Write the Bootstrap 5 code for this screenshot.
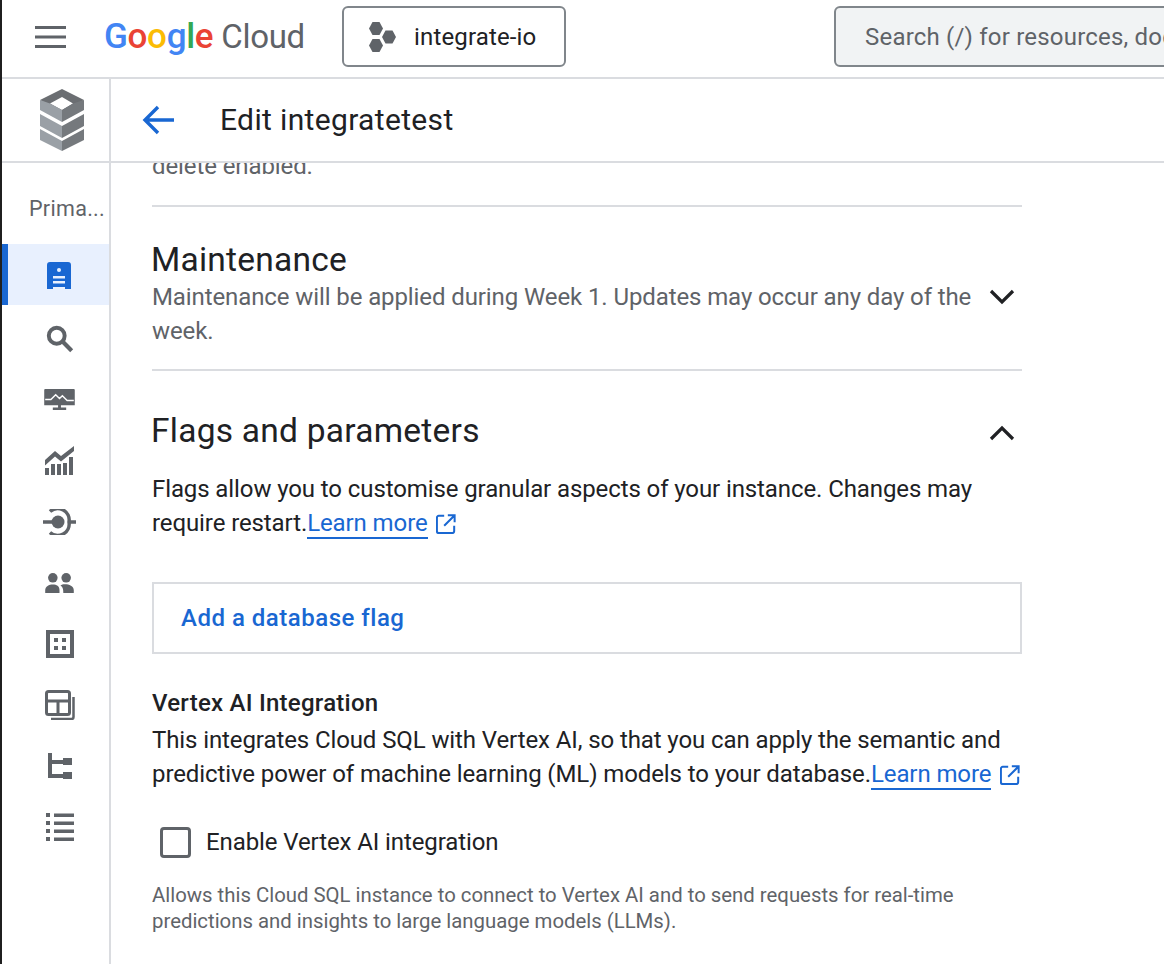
<!DOCTYPE html>
<html lang="en">
<head>
<meta charset="utf-8">
<title>Edit integratetest</title>
<link href="https://cdn.jsdelivr.net/npm/bootstrap@5.3.0/dist/css/bootstrap.min.css" rel="stylesheet">
<style>
html,body{height:100%;overflow:hidden}
body{font-family:Roboto,"Liberation Sans",sans-serif;color:#202124;background:#fff;font-size:24px;line-height:34px}
.shell{height:964px;border-left:2px solid #1f1f1f;overflow:hidden}
.topbar{height:79px;border-bottom:2px solid #dadce0;white-space:nowrap;overflow:hidden;padding-bottom:4px}
.burger{width:33px;margin-left:32px;flex:none}
.gc-logo{margin-left:37px;width:200px;font-size:35px;line-height:40px;letter-spacing:-.3px;font-family:Roboto,sans-serif;font-weight:500;flex:none}
.gc-logo .cloud{color:#5f6368;margin-left:8px;letter-spacing:-.3px;font-size:33px;font-weight:400}
.proj{margin-left:38px;width:224px;height:61px;border:2px solid #80868b;border-radius:6px;font-size:24px;flex:none;padding-left:24px;gap:17px;letter-spacing:.15px}
.searchbox{margin-left:268px;width:600px;height:61px;border:2px solid #80868b;border-radius:6px;background:#f1f3f4;color:#5f6368;padding-left:29px;flex:none;letter-spacing:.2px}
.rail{width:109px;border-right:2px solid #dadce0;flex:none}
.rail-logo{height:84px;border-bottom:2px solid #dadce0;margin-right:-2px;width:110px;padding-left:9px}
.rail-label{height:81px;font-size:21.500px;color:#5f6368;padding-left:27px;letter-spacing:.3px;padding-top:10px}
.rail-item{height:61px;padding-left:8px;padding-top:6px}
.rail-item.on{background:#e8f0fe;border-left:6px solid #1967d2;padding-left:0;padding-top:2px}
.subhead{height:84px;border-bottom:2px solid #dadce0}
.back{margin-left:30px;width:36px;flex:none}
.subhead h1{font-size:30px;line-height:40px;margin:0 0 0 43px;font-weight:400;letter-spacing:.35px;color:#202124}
.pane{width:870px;margin-left:41px}
.clipline{height:44px;color:#5f6368;overflow:hidden;border-bottom:2px solid #dadce0}
.clipline span{display:block;margin-top:-14px;letter-spacing:-.1px}
.sect{border-bottom:2px solid #dadce0}
.headline{font-size:33.500px;font-weight:400;line-height:40px;margin:0 0 0 -1px;color:#202124;letter-spacing:.25px}
.muted-t{color:#5f6368;letter-spacing:-.1px}
.body-t{letter-spacing:-.1px}
.lnk{color:#1967d2;text-decoration:none;border-bottom:2px solid #1967d2}
.ext{vertical-align:-3px;margin-left:3px}
.addflag{height:72px;border:2px solid #dadce0;padding-left:27px;color:#1967d2;font-weight:500;letter-spacing:.5px}
.vx-title{font-weight:500;line-height:34px;letter-spacing:.25px;color:#202124}
.cbox{width:31px;height:31px;border:3px solid #5f6368;border-radius:4px;flex:none;margin-left:8px}
.hint{font-size:20.350px;line-height:26px;color:#5f6368}
</style>
</head>
<body>
<div class="shell">
  <header class="topbar d-flex align-items-center">
    <svg class="burger" viewBox="0 0 33 24" height="24"><path d="M1 2.500h31M1 12h31M1 21.500h31" stroke="#5f6368" stroke-width="3.200" fill="none"/></svg>
    <div class="gc-logo"><span style="color:#4285f4">G</span><span style="color:#ea4335">o</span><span style="color:#fbbc04">o</span><span style="color:#4285f4">g</span><span style="color:#34a853">l</span><span style="color:#ea4335">e</span><span class="cloud">Cloud</span></div>
    <div class="proj d-flex align-items-center">
      <svg width="29" height="32" viewBox="0 0 29 32"><g fill="#5f6368"><path id="hx" d="M4.500 1h7l3.500 6.500-3.500 6.500h-7L1 7.500z"/><path d="M4.500 1h7l3.500 6.500-3.500 6.500h-7L1 7.500z" transform="translate(0 17)"/><path d="M4.500 1h7l3.500 6.500-3.500 6.500h-7L1 7.500z" transform="translate(13 8.500)"/></g></svg>
      <span>integrate-io</span>
    </div>
    <div class="searchbox d-flex align-items-center">Search (/) for resources, docs, products and more</div>
  </header>
  <div class="d-flex" style="height:885px">
    <nav class="rail">
      <div class="rail-logo d-flex align-items-center justify-content-center">
        <svg width="46" height="62" viewBox="0 0 46 62">
          <path d="M23 0 45 11 23 24 1 11zM23 8 11 14.500 23 21 34 14.500z" fill="#6b6e72" fill-rule="evenodd"/>
          <path d="M1 11 11 14.500 23 21V33L1 21z" fill="#9aa0a6"/><path d="M45 11 34 14.500 23 21V33L45 21z" fill="#75797d"/>
          <path d="M1 25 23 37V49L1 37z" fill="#9aa0a6"/><path d="M45 25 23 37V49L45 37z" fill="#75797d"/>
          <path d="M1 40 23 52V62L1 51z" fill="#9aa0a6"/><path d="M45 40 23 52V62L45 51z" fill="#75797d"/>
        </svg>
      </div>
      <div class="rail-label d-flex align-items-center">Prima...</div>
      <div class="rail-item on d-flex align-items-center justify-content-center">
        <svg width="26" height="30" viewBox="0 0 26 30"><path d="M4 1h18a3 3 0 0 1 3 3v24h-6v-2H7v2H1V4a3 3 0 0 1 3-3z" fill="#1967d2"/><circle cx="13" cy="9" r="2" fill="#e8f0fe"/><path d="M7 15h12v2.500H7zM7 20h12v2.500H7z" fill="#e8f0fe"/></svg>
      </div>
      <div class="rail-item d-flex align-items-center justify-content-center">
        <svg width="28" height="28" viewBox="0 0 30 30"><circle cx="11.500" cy="11.500" r="8.500" fill="none" stroke="#5f6368" stroke-width="4.200"/><path d="M17.500 17.500 27.500 27.500" stroke="#5f6368" stroke-width="4.500" fill="none"/></svg>
      </div>
      <div class="rail-item d-flex align-items-center justify-content-center">
        <svg width="31" height="21" viewBox="0 0 32 22"><path d="M1 0h30a1 1 0 0 1 1 1v16H0V1a1 1 0 0 1 1-1zM14.500 17h3v2.500H23V22H9v-2.500h5.500z" fill="#5f6368"/><path d="M1 11h6l5-5 4 4 3-3 5 5h7" fill="none" stroke="#fff" stroke-width="1.500"/></svg>
      </div>
      <div class="rail-item d-flex align-items-center justify-content-center">
        <svg width="29" height="29" viewBox="0 0 29 29"><path d="M0 14 10 5l6 5L29 0v5L16 15.500l-6-5-10 9zM0 22h4v7H0zM6 18h4v11H6zM12 18h4v11h-4zM18 17h4v12h-4zM24 11h4v18h-4z" fill="#5f6368"/></svg>
      </div>
      <div class="rail-item d-flex align-items-center justify-content-center">
        <svg width="33" height="26" viewBox="0 0 33 26"><circle cx="15" cy="13" r="6.500" fill="#5f6368"/><path d="M0 13h10M26 13h7" stroke="#5f6368" stroke-width="3.500"/><path d="M7 2.500A11.500 11.500 0 0 1 26 13a11.500 11.500 0 0 1-19 10.500" fill="none" stroke="#5f6368" stroke-width="3.500"/></svg>
      </div>
      <div class="rail-item d-flex align-items-center justify-content-center">
        <svg width="29" height="20" viewBox="0 0 30 21"><g fill="#5f6368"><circle cx="8" cy="5" r="5"/><circle cx="22" cy="5" r="5"/><path d="M0 21v-3c0-4 4-6 8-6s7 1.500 7 6v3zM18 12c5-1 12 1 12 6v3H19c0-3 0-6-3-8z"/></g></svg>
      </div>
      <div class="rail-item d-flex align-items-center justify-content-center">
        <svg width="28" height="28" viewBox="0 0 28 28"><path d="M2 2h24v24H2z" fill="none" stroke="#5f6368" stroke-width="4"/><path d="M8 8h4v4H8zM16 8h4v4h-4zM8 16h4v4H8zM16 16h4v4h-4z" fill="#5f6368"/></svg>
      </div>
      <div class="rail-item d-flex align-items-center justify-content-center">
        <svg width="30" height="30" viewBox="0 0 30 30"><rect x="1.500" y="1.500" width="23" height="23" rx="2" fill="none" stroke="#5f6368" stroke-width="3"/><path d="M1.500 11h23M13 11v13" stroke="#5f6368" stroke-width="3"/><path d="M28.500 7v20a2 2 0 0 1-2 2H6" fill="none" stroke="#5f6368" stroke-width="2.500"/></svg>
      </div>
      <div class="rail-item d-flex align-items-center justify-content-center">
        <svg width="24" height="26" viewBox="0 0 24 26"><path d="M2 0v23h16M2 9h16" fill="none" stroke="#5f6368" stroke-width="4"/><path d="M15 5h9v7h-9zM15 19h9v7h-9z" fill="#5f6368"/></svg>
      </div>
      <div class="rail-item d-flex align-items-center justify-content-center">
        <svg width="28" height="28" viewBox="0 0 28 28"><path d="M0 0h4v4H0zM8 .5h20v3.500H8zM0 8h4v4H0zM8 8.500h20v3.500H8zM0 16h4v4H0zM8 16.500h20v3.500H8zM0 24h4v4H0zM8 24.500h20v3.500H8z" fill="#5f6368"/></svg>
      </div>
    </nav>
    <main class="flex-grow-1 overflow-hidden">
      <div class="subhead d-flex align-items-center">
        <svg class="back" width="36" height="32" viewBox="0 0 36 32"><path d="M33 16H5M17 3 4 16l13 13" fill="none" stroke="#1967d2" stroke-width="3.400"/></svg>
        <h1>Edit integratetest</h1>
      </div>
      <div class="pane">
        <div class="clipline"><span>delete enabled.</span></div>
        <section class="sect" style="height:164px;padding-top:33px">
          <h2 class="headline">Maintenance</h2>
          <div class="d-flex align-items-start">
            <div class="muted-t flex-grow-1">Maintenance will be applied during Week 1. Updates may occur any day of the week.</div>
            <svg width="26" height="16" viewBox="0 0 26 16" style="margin:9px 7px 0 10px;flex:none"><path d="M2 2l11 11L24 2" fill="none" stroke="#202124" stroke-width="3.200"/></svg>
          </div>
        </section>
        <section>
          <div class="d-flex justify-content-between align-items-center" style="padding-top:40px">
            <h2 class="headline">Flags and parameters</h2>
            <svg width="26" height="16" viewBox="0 0 26 16" style="margin:4px 7px 0 0"><path d="M2 14 13 3l11 11" fill="none" stroke="#202124" stroke-width="3.200"/></svg>
          </div>
          <p class="body-t mb-0" style="margin-top:21px">Flags allow you to customise granular aspects of your instance. Changes may require restart.<a class="lnk" href="#">Learn more</a> <svg class="ext" width="20" height="20" viewBox="0 0 22 22"><path d="M9 2H3a2 2 0 0 0-2 2v15a2 2 0 0 0 2 2h15a2 2 0 0 0 2-2v-6M13 1.500h7.500V9M20 2 9 13" fill="none" stroke="#1967d2" stroke-width="2.200"/></svg></p>
          <div class="addflag d-flex align-items-center" style="margin-top:42px">Add a database flag</div>
          <div class="vx-title" style="margin-top:32px">Vertex AI Integration</div>
          <p class="body-t mb-0" style="margin-top:3px">This integrates Cloud SQL with Vertex AI, so that you can apply the semantic and predictive power of machine learning (ML) models to your database.<a class="lnk" href="#">Learn more</a> <svg class="ext" width="20" height="20" viewBox="0 0 22 22"><path d="M9 2H3a2 2 0 0 0-2 2v15a2 2 0 0 0 2 2h15a2 2 0 0 0 2-2v-6M13 1.500h7.500V9M20 2 9 13" fill="none" stroke="#1967d2" stroke-width="2.200"/></svg></p>
          <div class="d-flex align-items-center" style="margin-top:34px;gap:15px">
            <div class="cbox"></div>
            <span class="body-t">Enable Vertex AI integration</span>
          </div>
          <p class="hint mb-0" style="margin-top:23px">Allows this Cloud SQL instance to connect to Vertex AI and to send requests for real-time predictions and insights to large language models (LLMs).</p>
        </section>
      </div>
    </main>
  </div>
</div>
</body>
</html>
